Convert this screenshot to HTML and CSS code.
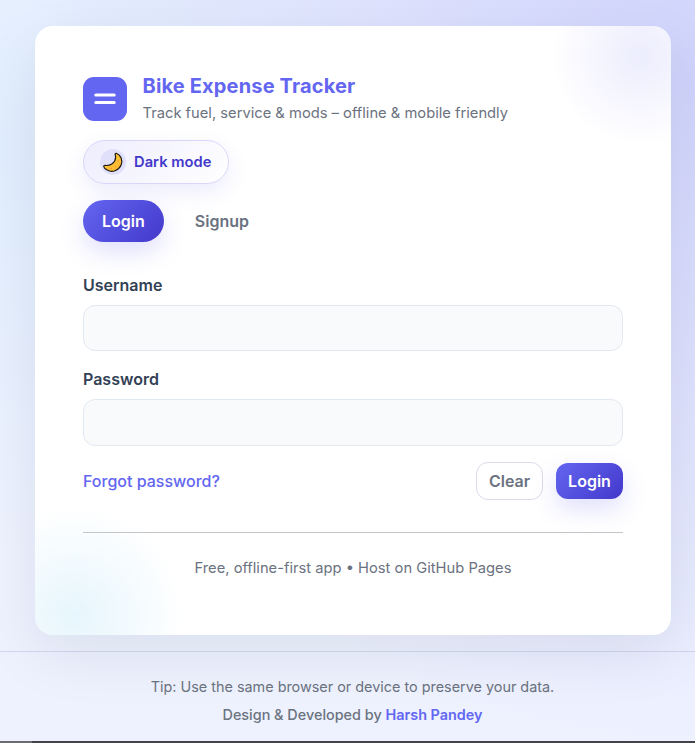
FILE: index.html
```
<!DOCTYPE html>
<html lang="en">
<head>
<meta charset="utf-8">
<title>Bike Expense Tracker</title>
<link rel="stylesheet" href="styles.css">
</head>
<body>
<main class="card">
  <header class="brand">
    <svg class="logo" viewBox="0 0 44 44"><rect width="44" height="44" rx="11" fill="#6366f1"/><path d="M12.8 18H31.200M12.800 25.600H31.200" stroke="#fff" stroke-width="3" stroke-linecap="round"/></svg>
    <div>
      <h1>Bike Expense Tracker</h1>
      <p class="subtitle">Track fuel, service &amp; mods – offline &amp; mobile friendly</p>
    </div>
  </header>
  <button class="theme" type="button">
    <span class="moon"><svg viewBox="0 0 26 26"><defs><linearGradient id="m" x1="0" y1="0" x2="1" y2="1"><stop offset="0" stop-color="#ffc83d"/><stop offset="1" stop-color="#fbb62e"/></linearGradient></defs><path d="M16.300 4.300C21 6.300 23.200 11.300 21 16.300C18.600 21.700 12.200 23.900 7.200 21.100C5.400 20.100 3.900 18.700 3.700 17.500C3.700 16.700 4.300 16.300 5.100 16.400C10 17 15.500 13.800 15.600 8.500C15.600 7.300 15.200 6.300 15.200 5.300C15.200 4.600 15.700 4.100 16.300 4.300Z" fill="url(#m)" stroke="#1c1917" stroke-width="1.200"/><path d="M18.200 11.500v.6M15.500 17.500h.6M10.800 19.300h.6" stroke="#ee9a1c" stroke-width="1.200" stroke-linecap="round"/></svg></span>
    Dark mode
  </button>
  <nav class="tabs">
    <button class="tab active" type="button">Login</button>
    <button class="tab" type="button">Signup</button>
  </nav>
  <form>
    <label for="user">Username</label>
    <input id="user" type="text">
    <label for="pass">Password</label>
    <input id="pass" type="password">
    <div class="actions">
      <a class="forgot">Forgot password?</a>
      <button class="btn clear" type="button">Clear</button>
      <button class="btn primary" type="button">Login</button>
    </div>
  </form>
  <hr>
  <p class="note">Free, offline-first app • Host on GitHub Pages</p>
</main>
<footer class="footer">
  <p>Tip: Use the same browser or device to preserve your data.</p>
  <p class="credit">Design &amp; Developed by <strong>Harsh Pandey</strong></p>
</footer>
<div class="bar"><span></span></div>
</body>
</html>
```
FILE: styles.css
```
* { box-sizing: border-box; }
body {
  margin: 0;
  height: 743px;
  padding-top: 26px;
  overflow: hidden;
  display: flex;
  flex-direction: column;
  font-family: Inter, sans-serif;
  font-size: 16px;
  line-height: 24px;
  color: #6b7280;
  background:
    radial-gradient(circle at 0% 20%, rgba(14, 165, 233, .06), transparent 45%),
    radial-gradient(circle at 100% 10%, rgba(99, 102, 241, .22), transparent 70%),
    #eef2ff;
}
h1, p { margin: 0; }
button, input { font: inherit; }
.card {
  position: relative;
  isolation: isolate;
  overflow: hidden;
  flex: none;
  width: 636px;
  height: 609px;
  margin: 0 24px 0 35px;
  padding: 48px;
  border-radius: 18px;
  background: #fff;
  box-shadow: 0 20px 60px rgba(15, 23, 42, .08);
}
.card::before, .card::after {
  content: "";
  position: absolute;
  z-index: -1;
  border-radius: 50%;
}
.card::before {
  width: 180px;
  height: 180px;
  top: -60px;
  right: -60px;
  background: radial-gradient(circle, rgba(99, 102, 241, .12), transparent 70%);
}
.card::after {
  width: 220px;
  height: 220px;
  bottom: -90px;
  left: -70px;
  background: radial-gradient(circle, rgba(14, 165, 233, .1), transparent 70%);
}
.brand { display: flex; align-items: center; gap: 15.500px; height: 50px; }
.logo { width: 44px; height: 44px; flex: none; }
.brand h1 { font-size: 20px; line-height: 25px; font-weight: 700; letter-spacing: .16px; color: #6366f1; }
.subtitle { font-size: 14.720px; line-height: 24px; margin-top: 2px; }
.theme {
  display: flex;
  align-items: center;
  gap: 8px;
  width: 146px;
  height: 44px;
  margin-top: 16px;
  padding: 0 0 0 16px;
  border: 1px solid #d8d7fa;
  border-radius: 22px;
  color: #4338ca;
  font-size: 14.720px;
  font-weight: 600;
  background: linear-gradient(135deg, #eeedfe, #fff);
  box-shadow: 0 8px 20px rgba(99, 102, 241, .12);
}
.moon { width: 26px; height: 26px; border-radius: 50%; background: #e0e0fb; }
.moon svg { display: block; }
.tabs { display: flex; gap: 12px; margin-top: 16px; }
.tab {
  height: 42px;
  padding: 0 19px;
  border: 0;
  border-radius: 21px;
  font-weight: 600;
  color: #6b7280;
  background: transparent;
}
.tab.active, .primary {
  color: #fff;
  background: linear-gradient(135deg, #6366f1, #4338ca);
  box-shadow: 0 10px 24px rgba(99, 102, 241, .2);
}
form { margin-top: 31px; }
label { display: block; margin-bottom: 8px; font-weight: 600; color: #334155; }
input {
  display: block;
  width: 100%;
  height: 46px;
  margin-bottom: 16px;
  border: 1px solid #e2e8f0;
  border-radius: 12px;
  background: #f8fafc;
}
#pass { height: 47px; }
.actions { display: flex; align-items: center; height: 38px; }
.forgot { margin-right: auto; font-weight: 500; color: #6366f1; }
.btn { padding: 0; width: 67px; border-radius: 12px; font-weight: 600; }
.clear { height: 38px; margin-right: 13px; border: 1px solid #d9dceb; color: #6b7280; background: #fff; }
.primary { height: 36px; border: 0; }
hr { margin: 32px 0 0; border: 0; height: 1px; background: #c4c5ca; }
.note { margin-top: 23px; font-size: 14.720px; text-align: center; }
.footer {
  flex: none;
  height: 90px;
  margin-top: 16px;
  padding: 23px 0 0 10px;
  border-top: 1px solid rgba(100, 116, 160, .2);
  text-align: center;
  font-size: 14.400px;
}
.credit { margin-top: 4px; font-weight: 500; }
.credit strong { font-weight: 600; color: #6366f1; }
.bar { height: 2px; flex: none; background: #424248; }
.bar span { display: block; width: 32px; height: 2px; background: #6b6b70; }
```
